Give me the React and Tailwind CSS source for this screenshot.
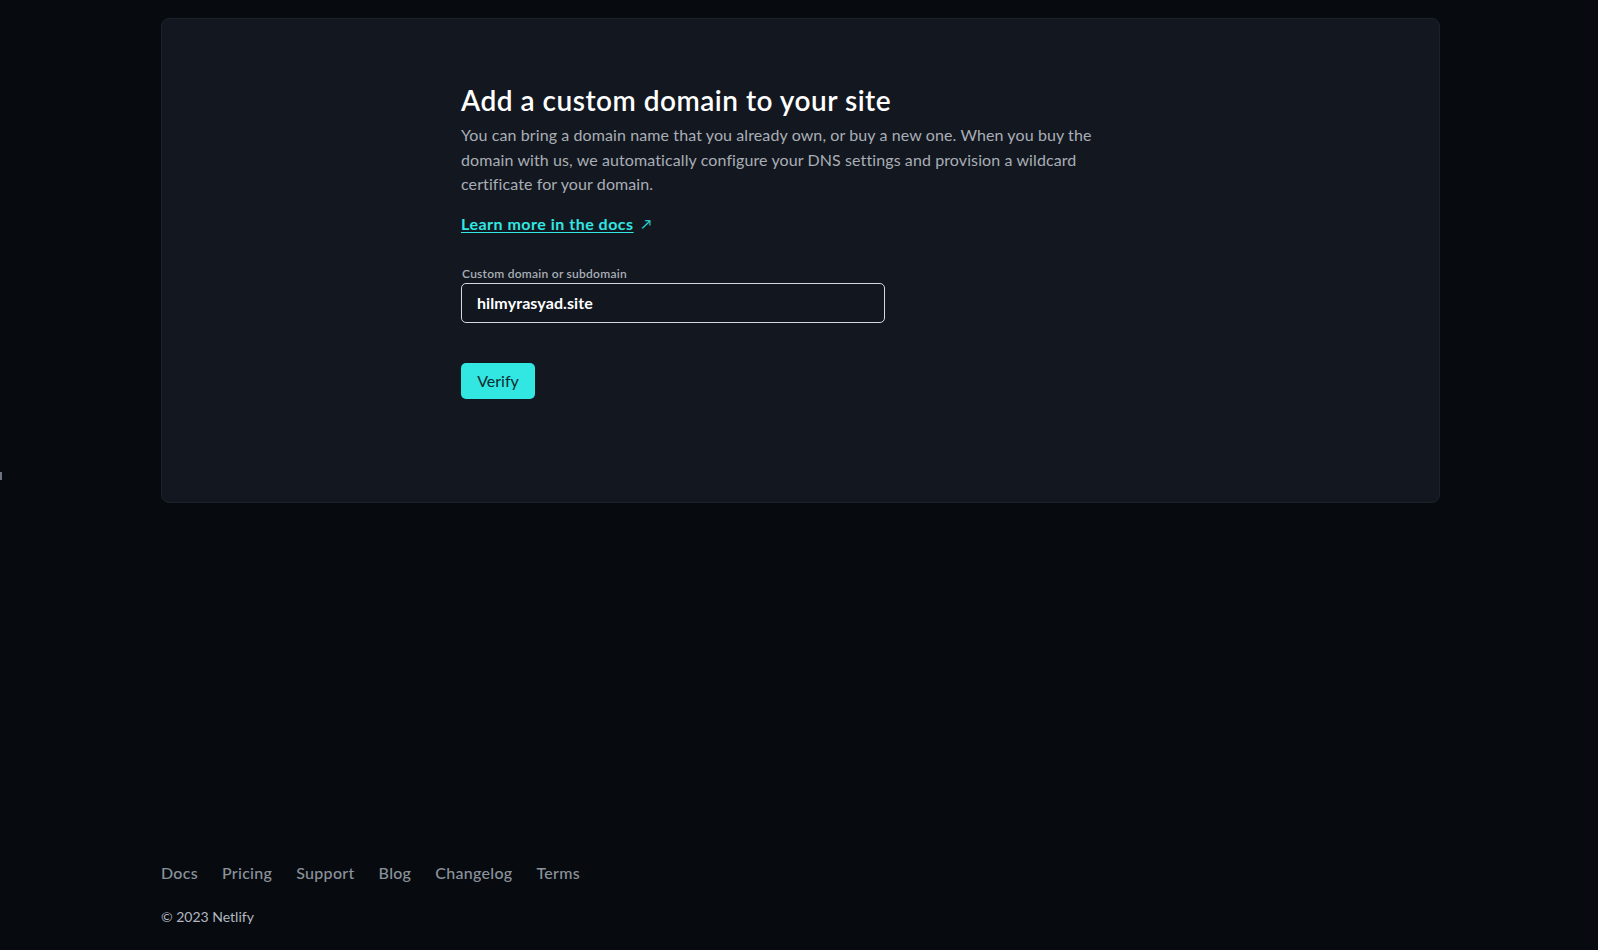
import React from "react";

export default function App() {
  return (
    <div
      className="relative min-h-screen w-full bg-[#070b10] flex flex-col"
      style={{ fontFamily: "Lato, 'Noto Sans', sans-serif" }}
    >
      <div className="absolute left-0 top-[472px] h-[8px] w-[2px] bg-[#6b7280]" />
      <main className="pl-[161px] pr-[158px] pt-[18px]">
        <section className="rounded-lg border border-[#1c222c] bg-[#131820] h-[485px] pl-[299px] pt-[63px]">
          <h1 className="text-[28px] leading-[36px] font-semibold tracking-[0.5px] text-white">
            Add a custom domain to your site
          </h1>
          <p className="mt-[5px] w-[680px] text-[16px] leading-[24.5px] tracking-[0.1px] text-[#a9aeb6]">
            You can bring a domain name that you already own, or buy a new one. When you buy the
            <br />
            domain with us, we automatically configure your DNS settings and provision a wildcard
            <br />
            certificate for your domain.
          </p>
          <a
            href="#"
            className="mt-[15px] inline-flex items-center gap-[8px] text-[16px] leading-[24px] font-bold tracking-[0.5px] text-[#32e6e2]"
          >
            <span className="underline underline-offset-2">Learn more in the docs</span>
            <span className="text-[13px] font-normal">↗</span>
          </a>
          <div className="mt-[30px]">
            <label className="block text-[12px] leading-[16px] font-semibold tracking-[0.25px] text-[#a9aeb6] pl-[1px]">
              Custom domain or subdomain
            </label>
            <div className="mt-[1px] flex h-[40px] w-[424px] items-center rounded-[5px] border border-[#d5d8dc] bg-[#12171f] px-[15px]">
              <span className="text-[16px] font-bold tracking-[0.1px] text-white">hilmyrasyad.site</span>
            </div>
          </div>
          <button className="mt-[40px] h-[36px] w-[74px] rounded-[5px] bg-[#32e6e2] text-[16px] text-[#0e2b2f]">
            Verify
          </button>
        </section>
      </main>
      <footer className="mt-auto px-[161px] pb-[23px]">
        <nav className="flex gap-[24px] text-[16px] font-medium tracking-[0.3px] text-[#8b929b]">
          <a href="#">Docs</a>
          <a href="#">Pricing</a>
          <a href="#">Support</a>
          <a href="#">Blog</a>
          <a href="#">Changelog</a>
          <a href="#">Terms</a>
        </nav>
        <p className="mt-[22px] text-[14px] leading-[20px] text-[#b3b8c0]">© 2023 Netlify</p>
      </footer>
    </div>
  );
}
